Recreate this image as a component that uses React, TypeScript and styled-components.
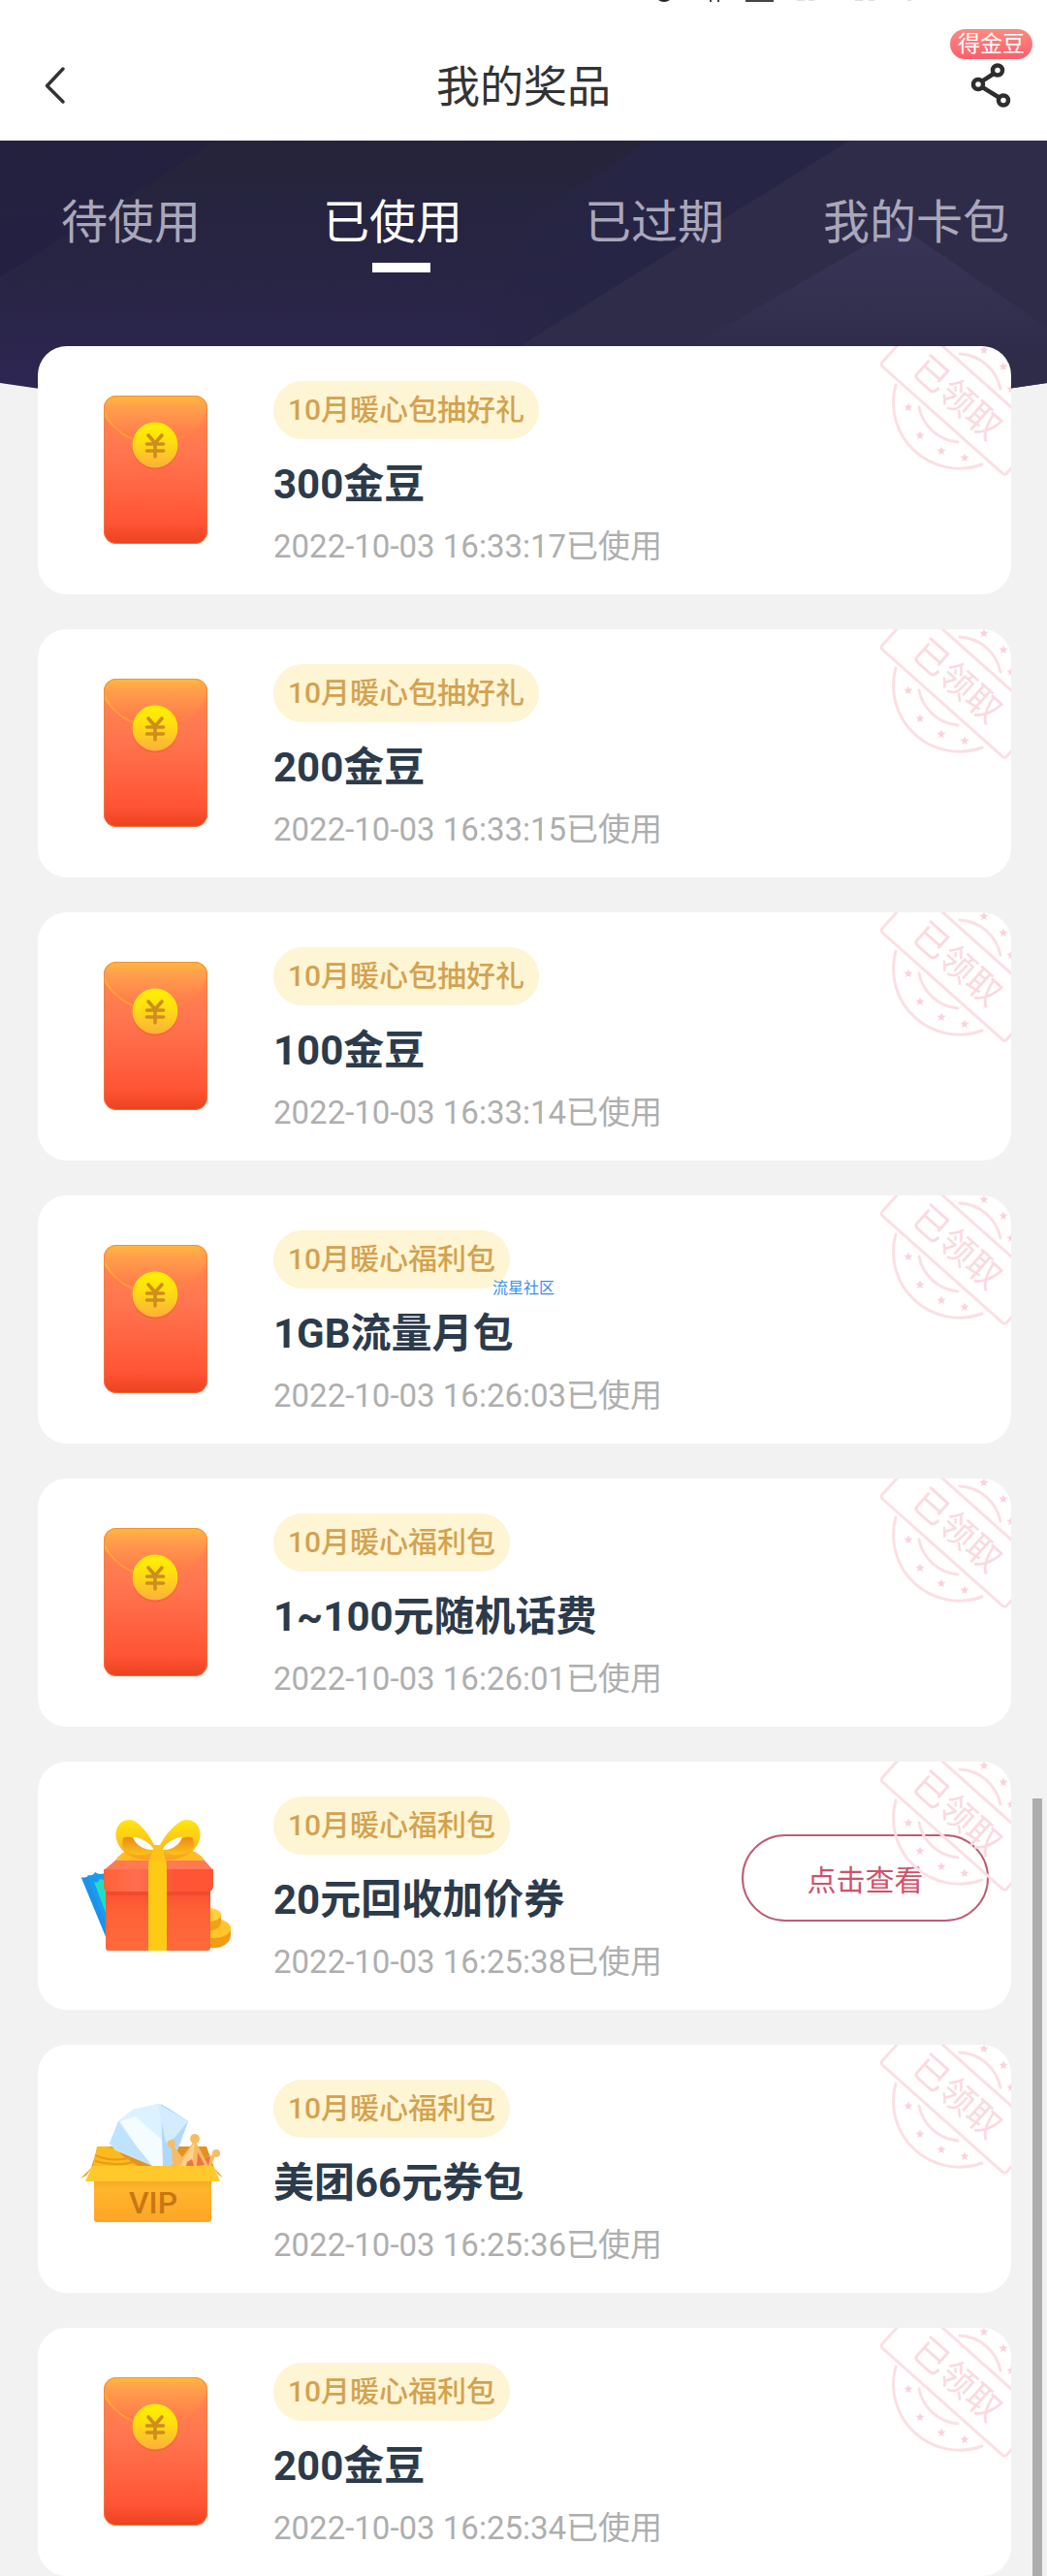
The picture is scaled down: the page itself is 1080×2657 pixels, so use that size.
import React from "react";
import styled, { createGlobalStyle } from "styled-components";

const GlobalStyle = createGlobalStyle`
  * { box-sizing: border-box; }
  body {
    margin: 0;
    background: #f2f2f2;
    font-family: Roboto, "Noto Sans CJK SC", sans-serif;
  }
  h1, h2, p, ul { margin: 0; padding: 0; }
  ul { list-style: none; }
  button { font-family: inherit; background: none; border: 0; padding: 0; cursor: pointer; }
`;

const Page = styled.div`
  position: relative;
  overflow: hidden;
`;

const Header = styled.header`
  position: relative;
  display: grid;
  grid-template-columns: 1fr auto 1fr;
  align-items: center;
  min-height: 145px;
  padding: 32px 34px 0;
  background: #fff;
`;

const StatusRemains = styled.svg`
  position: absolute;
  top: 0;
  right: 130px;
`;

const IconButton = styled.button<{ $side: "start" | "end" }>`
  display: flex;
  justify-self: ${(p) => p.$side};
`;

const PageTitle = styled.h1`
  padding-top: 4px;
  font-size: 45px;
  font-weight: 400;
  line-height: 64px;
  color: #333;
`;

const Badge = styled.span`
  position: absolute;
  top: 30px;
  right: 15px;
  padding: 0 8px;
  border-radius: 16px;
  background: linear-gradient(#fb8b83, #fa5f6c);
  color: #fff;
  font-size: 23px;
  line-height: 31px;
`;

const Main = styled.main`
  position: relative;
`;

const Backdrop = styled.svg`
  position: absolute;
  top: 0;
  left: 0;
  width: 100%;
  height: 272px;
`;

const Tabs = styled.nav`
  position: relative;
  display: grid;
  grid-template-columns: repeat(4, 1fr);
  height: 212px;
  padding-top: 48px;
`;

const Tab = styled.button<{ $active: boolean }>`
  position: relative;
  height: 88px;
  padding-bottom: 14px;
  font-size: 48px;
  line-height: 72px;
  white-space: nowrap;
  color: ${(p) => (p.$active ? "#fff" : "#aaa7ba")};

  &::after {
    content: "";
    display: ${(p) => (p.$active ? "block" : "none")};
    position: absolute;
    left: 114px;
    bottom: 0;
    width: 60px;
    height: 10px;
    background: #fff;
  }
`;

const List = styled.ul`
  position: relative;
  display: flex;
  flex-direction: column;
  gap: 36px;
  padding: 0 37px 0 39px;
`;

const Card = styled.li`
  position: relative;
  display: flex;
  align-items: center;
  gap: 42px;
  min-height: 256px;
  padding: 0 23px 0 41px;
  border-radius: 30px;
  background: #fff;
  overflow: hidden;
`;

const Art = styled.svg`
  flex: none;
  width: 160px;
  height: 160px;
`;

const Info = styled.div`
  flex: 1;
  display: flex;
  flex-direction: column;
  align-items: flex-start;
  gap: 17px;
  padding-top: 4px;
`;

const Tag = styled.span`
  padding: 0 15px;
  border-radius: 30px;
  background: #fdf5d3;
  color: #d3a250;
  font-size: 30px;
  font-weight: 500;
  line-height: 60px;
`;

const Name = styled.h2`
  font-size: 42px;
  font-weight: 700;
  line-height: 60px;
  color: #2c3b4b;
`;

const Time = styled.p`
  font-size: 33px;
  line-height: 34px;
  color: #aeaeae;
`;

const ViewButton = styled.button`
  width: 255px;
  height: 90px;
  margin-bottom: 16px;
  border: 2px solid #bd5d75;
  border-radius: 45px;
  color: #cf5268;
  font-size: 30px;
`;

const StampArt = styled.svg`
  position: absolute;
  top: 0;
  right: 0;
  pointer-events: none;
`;

const Watermark = styled.span`
  position: absolute;
  top: 84px;
  left: 469px;
  font-size: 16px;
  line-height: 24px;
  color: #3a8fe8;
`;

const ScrollThumb = styled.div`
  position: absolute;
  top: 1855px;
  right: 5px;
  bottom: 0;
  width: 10px;
  background: #adadad;
`;

function HeroBackdrop() {
  return (
    <Backdrop viewBox="0 0 1080 272" preserveAspectRatio="none" aria-hidden="true">
      <defs>
        <linearGradient id="base" x1="0" y1="0" x2="0" y2="1">
          <stop offset="0" stopColor="#252439" />
          <stop offset="0.3" stopColor="#262440" />
          <stop offset="0.6" stopColor="#292547" />
          <stop offset="1" stopColor="#2f2655" />
        </linearGradient>
        <linearGradient id="leftFacet" x1="0" y1="0" x2="0" y2="1">
          <stop offset="0" stopColor="#23213e" />
          <stop offset="1" stopColor="#242043" />
        </linearGradient>
        <linearGradient id="midFade" x1="540" y1="60" x2="640" y2="110" gradientUnits="userSpaceOnUse">
          <stop offset="0" stopColor="#272546" stopOpacity="0" />
          <stop offset="1" stopColor="#272546" />
        </linearGradient>
        <linearGradient id="peak" x1="0" y1="0" x2="0" y2="1">
          <stop offset="0" stopColor="#383558" />
          <stop offset="1" stopColor="#2f2c4a" />
        </linearGradient>
        <clipPath id="curve">
          <path d="M0 0H1080V250Q540 332 0 250Z" />
        </clipPath>
      </defs>
      <g clipPath="url(#curve)">
        <rect width="1080" height="272" fill="url(#base)" />
        <path d="M0 0H224L0 141Z" fill="url(#leftFacet)" />
        <path d="M670 0H880L540 215H330Z" fill="url(#midFade)" />
        <path d="M876 0H1080V272H440Z" fill="#2f2c4a" />
        <path d="M928 88L1080 193V225H690Z" fill="url(#peak)" />
      </g>
    </Backdrop>
  );
}

function Envelope() {
  return (
    <Art viewBox="0 0 160 160" aria-hidden="true">
      <defs>
        <linearGradient id="envBody" x1="0" y1="0" x2="0" y2="1">
          <stop offset="0" stopColor="#ff8a50" />
          <stop offset="0.4" stopColor="#ff754f" />
          <stop offset="0.86" stopColor="#ff5435" />
          <stop offset="0.93" stopColor="#f64a2a" />
          <stop offset="1" stopColor="#e9431f" />
        </linearGradient>
        <linearGradient id="envFlap" x1="0" y1="0" x2="0" y2="1">
          <stop offset="0" stopColor="#ffb93f" />
          <stop offset="0.25" stopColor="#ff9f4c" />
          <stop offset="1" stopColor="#ff734b" />
        </linearGradient>
        <linearGradient id="envEdge" x1="0" y1="0" x2="1" y2="0">
          <stop offset="0" stopColor="#ffb02e" />
          <stop offset="0.5" stopColor="#ffa033" />
          <stop offset="1" stopColor="#ff7a4c" />
        </linearGradient>
        <linearGradient id="envCoin" x1="0" y1="0" x2="0" y2="1">
          <stop offset="0" stopColor="#fff000" />
          <stop offset="0.4" stopColor="#ffdf10" />
          <stop offset="1" stopColor="#fbb03b" />
        </linearGradient>
      </defs>
      <rect x="27" y="3" width="107" height="153" rx="13" fill="url(#envBody)" />
      <path d="M27 24V16A13 13 0 0 1 40 3H121A13 13 0 0 1 134 16V24C123 43 102 52 80 52S38 43 27 24Z" fill="url(#envFlap)" />
      <path d="M28 17C33 34 46 46 60 50C46 44 36 36 28 24Z" fill="#ffae38" />
      <path d="M28 20C38 42 58 51 80 51S122 43 133 22" fill="none" stroke="url(#envEdge)" strokeWidth="1" />
      <rect x="27.5" y="3.5" width="106" height="152" rx="12.5" fill="none" stroke="#f0803e" strokeOpacity="0.7" />
      <circle cx="80" cy="55.500" r="24" fill="#e85e2c" opacity="0.45" />
      <circle cx="80" cy="54" r="23.500" fill="url(#envCoin)" />
      <path d="M73 44L80 52L87 44M71.500 53H88.500M71.500 60H88.500M80 52V66" fill="none" stroke="#cf8d1c" strokeWidth="3.600" strokeLinecap="round" />
    </Art>
  );
}

function Gift() {
  return (
    <Art viewBox="0 0 160 160" aria-hidden="true">
      <defs>
        <linearGradient id="giftBody" x1="0" y1="0" x2="0" y2="1">
          <stop offset="0" stopColor="#f94f31" />
          <stop offset="0.35" stopColor="#ff6136" />
          <stop offset="1" stopColor="#ff6a3b" />
        </linearGradient>
        <linearGradient id="giftLid" x1="0" y1="0" x2="1" y2="0">
          <stop offset="0" stopColor="#ff6137" />
          <stop offset="0.3" stopColor="#ff6e50" />
          <stop offset="0.65" stopColor="#ff5436" />
          <stop offset="1" stopColor="#ff5533" />
        </linearGradient>
        <linearGradient id="giftBow" x1="0" y1="0" x2="0" y2="1">
          <stop offset="0" stopColor="#ffe60c" />
          <stop offset="0.6" stopColor="#fdc31c" />
          <stop offset="1" stopColor="#f5a01e" />
        </linearGradient>
        <linearGradient id="giftInner" x1="0" y1="0" x2="0" y2="1">
          <stop offset="0" stopColor="#e98a17" />
          <stop offset="1" stopColor="#ffc21b" />
        </linearGradient>
      </defs>
      <path d="M4 71Q9 74 11 69Q16 70 18 66Q23 70 30 66V132Z" fill="#189cf0" />
      <path d="M17 76Q21 78 23 73L32 75V116Z" fill="#24dcc0" />
      <path d="M4 72L30 135V122L10 71Z" fill="#1b93ec" />
      <path d="M132 127V138C132 149 158 145 158 131V122Z" fill="#f29b14" />
      <ellipse cx="141" cy="124" rx="17" ry="10" fill="#ffc62a" />
      <path d="M130 111V121C132 130 148 126 148 118V109Z" fill="#f3a018" />
      <ellipse cx="135" cy="110" rx="13" ry="7" fill="#ffd039" />
      <path d="M29 84H137V144Q137 147 134 147H32Q29 147 29 144Z" fill="url(#giftBody)" />
      <path d="M39 54Q46 44 58 42H110Q124 44 131 54L140 64H27Z" fill="#ff7955" />
      <path d="M39 54Q46 44 58 42H110Q124 44 131 54Z" fill="#ffbd24" />
      <path d="M27 63H140V80Q140 86 134 86H33Q27 86 27 80Z" fill="url(#giftLid)" />
      <path d="M30 86H137V90H30Z" fill="#e8402a" opacity="0.45" />
      <path d="M75 42H90L92 60V147H73V60Z" fill="#fdcb16" />
      <path d="M82 45C76 28 62 12 54 12C41 12 37 25 41 35C46 47 58 55 79 53Z" fill="url(#giftBow)" />
      <path d="M82 45C88 28 104 12 112 12C125 12 129 25 125 35C120 47 106 55 85 53Z" fill="url(#giftBow)" />
      <path d="M47 31C53 27 67 33 79 44C66 52 47 48 46 37Z" fill="url(#giftInner)" />
      <path d="M119 31C113 27 99 33 86 44C99 52 119 48 120 37Z" fill="url(#giftInner)" />
      <path d="M57 30C66 30 75 36 79 43C69 44 60 38 57 30Z" fill="#fff" />
      <path d="M108 30C100 30 91 36 87 43C97 44 105 38 108 30Z" fill="#fff" />
      <path d="M79 38H87L91 55H74Z" fill="#fdc31a" />
    </Art>
  );
}

function VipBox() {
  return (
    <Art viewBox="0 0 160 160" aria-hidden="true">
      <defs>
        <linearGradient id="vipFront" x1="0" y1="0" x2="0" y2="1">
          <stop offset="0" stopColor="#f6a524" />
          <stop offset="0.25" stopColor="#ffb52d" />
          <stop offset="1" stopColor="#ffa427" />
        </linearGradient>
      </defs>
      <path d="M21 57H133L141 79H14Z" fill="#e5901f" />
      <path d="M20 57Q38 55 46 66L62 77H16Z" fill="#fbb91c" />
      <path d="M18 66Q36 74 56 68M18 72Q38 78 58 73" fill="none" stroke="#e79b17" strokeWidth="2" />
      <path d="M83 13L57 19L42 31L33 54L39 61L77 77H97L114 31L95 18Z" fill="#c4e5ff" />
      <path d="M83 13L57 19L42 31L62 61L91 50Z" fill="#dcf2ff" />
      <path d="M44 31L60 26L91 54L89 77H77L62 58Z" fill="#f5fcff" />
      <path d="M42 31L33 54L77 77L60 56Z" fill="#bfe2ff" />
      <path d="M86 13L114 31L97 77H88Z" fill="#b0d8fc" />
      <path d="M83 13L114 31L100 48L91 53Z" fill="#d3ecff" />
      <path d="M97 54L108 68L121 50L131 69L143 64L137 79H98Z" fill="#f8ba63" />
      <path d="M112 65L121 52L118 77H106Z" fill="#ffd18b" />
      <path d="M113 73L118 70L120 77H112ZM124 63L131 76L123 77ZM131 69L137 67L135 77Z" fill="#ee7244" />
      <circle cx="97" cy="54" r="4" fill="#f6bd65" />
      <circle cx="121" cy="49" r="5" fill="#f8bd60" />
      <circle cx="143" cy="64" r="4" fill="#f6bd65" />
      <path d="M16 77L3 90L9 87ZM139 77L150 89L145 86Z" fill="#f0a51e" />
      <path d="M17 90H138V132Q138 135 135 135H20Q17 135 17 132Z" fill="url(#vipFront)" />
      <path d="M15 77H140L147 93H8Z" fill="#ffc92c" />
      <text x="78" y="126" textAnchor="middle" fontSize="32" fontWeight="500" fill="#c97512">VIP</text>
    </Art>
  );
}

const STARS = [
  [34, 63],
  [46, 92],
  [68, 108],
  [92, 115],
  [112, 4],
  [132, 21],
  [140, 44],
];

function Stamp() {
  return (
    <StampArt width="140" height="140" viewBox="0 0 140 140">
      <g fill="none" stroke="#fbdfe3" strokeWidth="3" strokeLinecap="round" strokeLinejoin="round">
        <rect x="5" y="19" width="172" height="57" rx="3" transform="rotate(41.700 5 19) translate(0 -57)" />
        <path d="M21 40A68 68 0 0 0 110 122" />
        <path d="M45 63A45 45 0 0 0 85 99" />
        <path d="M87 8A45 45 0 0 1 129 44" />
      </g>
      {STARS.map(([x, y]) => (
        <path
          key={`${x}-${y}`}
          transform={`translate(${x} ${y})`}
          d="M0-4.500L1.300-1.400L4.500-1.200L2 1L2.800 4L0 2.400L-2.800 4L-2 1L-4.500-1.200L-1.300-1.400Z"
          fill="#fad3d9"
        />
      ))}
      <text transform="translate(85 53) rotate(41.700)" y="13" textAnchor="middle" fontSize="36" fill="#fadadf">
        已领取
      </text>
    </StampArt>
  );
}

type Kind = "envelope" | "gift" | "vip";

interface Prize {
  kind: Kind;
  tag: string;
  name: string;
  time: string;
  action?: string;
  mark?: string;
}

const PRIZES: Prize[] = [
  { kind: "envelope", tag: "10月暖心包抽好礼", name: "300金豆", time: "2022-10-03 16:33:17" },
  { kind: "envelope", tag: "10月暖心包抽好礼", name: "200金豆", time: "2022-10-03 16:33:15" },
  { kind: "envelope", tag: "10月暖心包抽好礼", name: "100金豆", time: "2022-10-03 16:33:14" },
  { kind: "envelope", tag: "10月暖心福利包", name: "1GB流量月包", time: "2022-10-03 16:26:03", mark: "流星社区" },
  { kind: "envelope", tag: "10月暖心福利包", name: "1~100元随机话费", time: "2022-10-03 16:26:01" },
  { kind: "gift", tag: "10月暖心福利包", name: "20元回收加价券", time: "2022-10-03 16:25:38", action: "点击查看" },
  { kind: "vip", tag: "10月暖心福利包", name: "美团66元券包", time: "2022-10-03 16:25:36" },
  { kind: "envelope", tag: "10月暖心福利包", name: "200金豆", time: "2022-10-03 16:25:34" },
];

const ART: Record<Kind, () => React.JSX.Element> = { envelope: Envelope, gift: Gift, vip: VipBox };

const TABS = ["待使用", "已使用", "已过期", "我的卡包"];

function PrizeCard({ prize }: { prize: Prize }) {
  const Picture = ART[prize.kind];
  return (
    <Card>
      <Picture />
      <Info>
        <Tag>{prize.tag}</Tag>
        <Name>{prize.name}</Name>
        <Time>{prize.time}已使用</Time>
      </Info>
      {prize.action && <ViewButton type="button">{prize.action}</ViewButton>}
      <Stamp />
      {prize.mark && <Watermark>{prize.mark}</Watermark>}
    </Card>
  );
}

export default function App() {
  const [active, setActive] = React.useState(1);
  return (
    <>
      <GlobalStyle />
      <Page>
        <Header>
          <StatusRemains width="280" height="4" viewBox="0 0 280 4" aria-hidden="true">
            <path d="M9 0Q15 4 21 0Z" fill="#222" />
            <path d="M62 0h2v2h-2zM70 0h2v2h-2zM99 0h29v2h-29z" fill="#444" />
            <path d="M152 0h8v1h-8zM164 0h6v1h-6zM212 0h8v1h-8zM226 0h6v1h-6zM266 0h4v1h-4z" fill="#ddd" />
          </StatusRemains>
          <IconButton type="button" $side="start" aria-label="返回">
            <svg width="44" height="44" viewBox="0 0 44 44" fill="none" stroke="#333" strokeWidth="3.500" strokeLinecap="round" strokeLinejoin="round">
              <path d="M31 4L14.500 21.500L31 38" />
            </svg>
          </IconButton>
          <PageTitle>我的奖品</PageTitle>
          <IconButton type="button" $side="end" aria-label="分享">
            <svg width="48" height="48" viewBox="0 0 48 48" fill="none" stroke="#2e2e2e" strokeWidth="4.500">
              <circle cx="31" cy="7.500" r="5" />
              <circle cx="11" cy="22" r="5" />
              <circle cx="37" cy="38.500" r="5" />
              <path d="M27 11L15.500 18.500M15.500 25L32.500 35.500" />
            </svg>
          </IconButton>
          <Badge>得金豆</Badge>
        </Header>
        <Main>
          <HeroBackdrop />
          <Tabs>
            {TABS.map((label, i) => (
              <Tab key={label} type="button" $active={i === active} onClick={() => setActive(i)}>
                {label}
              </Tab>
            ))}
          </Tabs>
          <List>
            {PRIZES.map((prize) => (
              <PrizeCard key={prize.time} prize={prize} />
            ))}
          </List>
        </Main>
        <ScrollThumb />
      </Page>
    </>
  );
}
